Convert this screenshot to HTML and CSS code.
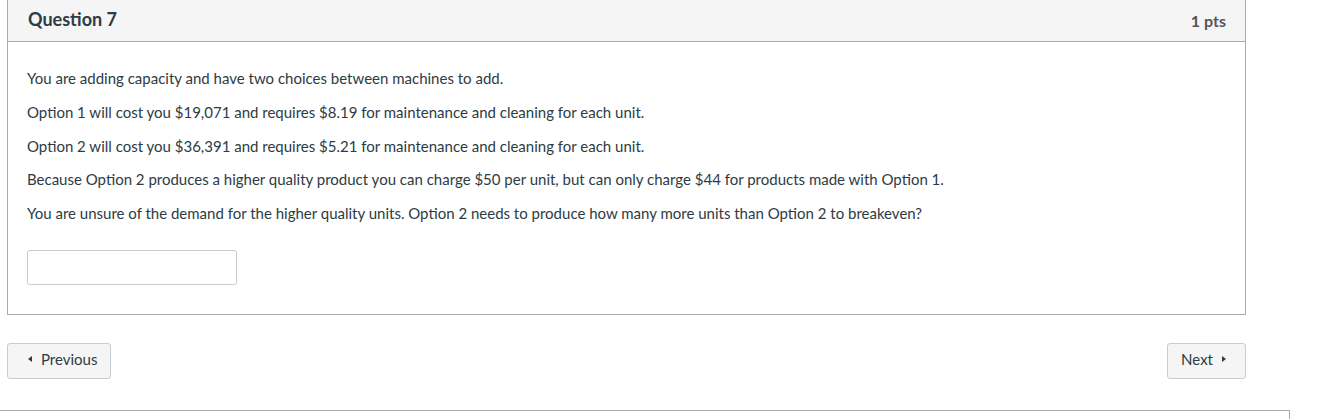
FILE: index.html
```html
<!DOCTYPE html>
<html lang="en">
<head>
<meta charset="utf-8">
<title>Question 7</title>
<link rel="stylesheet" href="styles.css">
</head>
<body>
<div class="page">
  <div class="question">
    <div class="question-header">
      <span class="question-title">Question 7</span>
      <span class="question-points">1 pts</span>
    </div>
    <div class="question-body">
      <p>You are adding capacity and have two choices between machines to add.</p>
      <p>Option 1 will cost you $19,071 and requires $8.19 for maintenance and cleaning for each unit.</p>
      <p>Option 2 will cost you $36,391 and requires $5.21 for maintenance and cleaning for each unit.</p>
      <p>Because Option 2 produces a higher quality product you can charge $50 per unit, but can only charge $44 for products made with Option 1.</p>
      <p>You are unsure of the demand for the higher quality units. Option 2 needs to produce how many more units than Option 2 to breakeven?</p>
      <input class="answer" type="text" aria-label="Answer">
    </div>
  </div>
  <div class="nav">
    <button class="btn btn-prev"><span class="tri tri-left"></span>Previous</button>
    <button class="btn btn-next">Next<span class="tri tri-right"></span></button>
  </div>
  <div class="footer-box"></div>
</div>
</body>
</html>
```
FILE: styles.css
```css
html, body {
  margin: 0;
  padding: 0;
  background: #ffffff;
}
body {
  font-family: Lato, "Open Sans", "Liberation Sans", sans-serif;
  color: #2d3b45;
  overflow: hidden;
}
.page {
  width: 1320px;
  height: 420px;
}
.question {
  margin: -1px 0 0 7px;
  width: 1239px;
  box-sizing: border-box;
  border: 1px solid #aaaaaa;
}
.question-header {
  height: 42px;
  box-sizing: border-box;
  background: #f5f5f5;
  border-bottom: 1px solid #aaaaaa;
  display: flex;
  align-items: center;
  justify-content: space-between;
  padding: 0 19px 0 20px;
}
.question-title {
  font-size: 18px;
  font-weight: 700;
  color: #2d3b45;
  margin-top: -4px;
}
.question-points {
  font-size: 16px;
  font-weight: 700;
  color: #565656;
  margin-top: -1px;
}
.question-body {
  padding: 25px 19px 29px 19px;
}
.question-body p {
  margin: 0 0 11.25px;
  font-size: 15px;
  line-height: 22.5px;
}
.question-body p:last-of-type {
  margin-bottom: 0;
}
.answer {
  display: block;
  margin-top: 25.5px;
  width: 210px;
  height: 35px;
  box-sizing: border-box;
  border: 1px solid #c7cdd1;
  border-radius: 3px;
  background: #fff;
  font-family: inherit;
  font-size: 15px;
}
.nav {
  display: flex;
  justify-content: space-between;
  margin: 28px 0 0 7px;
  width: 1239px;
}
.btn {
  height: 36px;
  box-sizing: border-box;
  background: #f5f5f5;
  border: 1px solid #c7cdd1;
  border-radius: 3px;
  color: #2d3b45;
  font-family: inherit;
  font-size: 15px;
  display: flex;
  align-items: center;
  gap: 9px;
  padding-top: 0;
  padding-bottom: 4px;
}
.btn-prev {
  padding-left: 20px;
  padding-right: 13px;
}
.btn-next {
  padding-left: 13px;
  padding-right: 19px;
}
.tri {
  width: 0;
  height: 0;
  border-top: 3px solid transparent;
  border-bottom: 3px solid transparent;
}
.tri-left {
  border-right: 4px solid #2d3b45;
}
.tri-right {
  border-left: 4px solid #2d3b45;
}
.footer-box {
  margin-top: 31px;
  width: 1290px;
  height: 20px;
  box-sizing: border-box;
  border-top: 1px solid #aaaaaa;
  border-right: 1px solid #aaaaaa;
}
```
